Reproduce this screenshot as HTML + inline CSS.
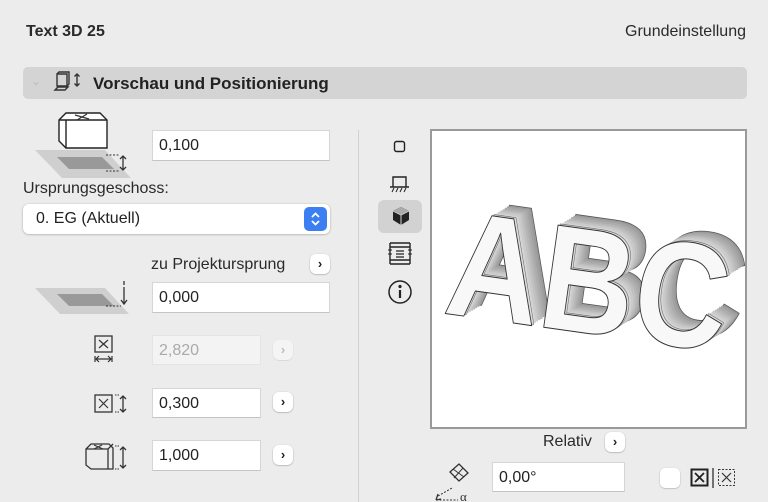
<!DOCTYPE html>
<html><head><meta charset="utf-8"><style>
*{margin:0;padding:0;box-sizing:border-box}
body{width:768px;height:502px;background:#ececec;font-family:"Liberation Sans",sans-serif;color:#222;position:relative;overflow:hidden}
.a{position:absolute}
.f{position:absolute;background:#fff;border:1px solid #d6d6d6;border-bottom-color:#c4c4c4;font-size:16px;padding-left:6px;line-height:29px;color:#222}
.btn{position:absolute;width:20px;height:20px;border-radius:6px;background:#fff;box-shadow:0 0.5px 1.5px rgba(0,0,0,.35);font-size:13px;font-weight:bold;text-align:center;line-height:20px;color:#222}
</style></head><body>
<div class="a" style="left:26px;top:23px;font-size:16px;font-weight:bold;color:#2a2a2a">Text 3D 25</div>
<div class="a" style="right:22px;top:23px;font-size:16px;color:#2a2a2a">Grundeinstellung</div>
<div class="a" style="left:23px;top:67px;width:724px;height:32px;background:#d4d4d4;border-radius:5px"></div>
<div class="a" style="left:31px;top:74px;font-size:12px;color:#bbb">&#8964;</div>
<svg class="a" style="left:53px;top:70px" width="30" height="26" viewBox="0 0 30 26" fill="none" stroke="#333" stroke-width="1.4"><path d="M4 4h10v12H4z M4 4l2-2h10v12l-2 2 M2 20l3-3h10l-3 3z"/><path d="M24 4v12 M21.5 6.5L24 4l2.5 2.5 M21.5 13.5L24 16l2.5-2.5"/></svg>
<div class="a" style="left:93px;top:74px;font-size:17px;font-weight:bold;color:#222">Vorschau und Positionierung</div>

<svg class="a" style="left:32px;top:112px" width="100" height="66" viewBox="0 0 100 66"><path d="M3 38h70l26 28H30z" fill="#cfcfcf"/><path d="M25 45h45l12 12H37z" fill="#999"/><path d="M27 8L34 1h34l7 7v28H34L27 29z" fill="#fff" stroke="#222" stroke-width="1.4"/><path d="M34 8h41 M34 8v28 M27 8h7" fill="none" stroke="#222" stroke-width="1.4"/><path d="M43 3l14 4 M55 2l-10 6" stroke="#333" stroke-width="1.3"/><path d="M74 43h13 M74 59h13" stroke="#333" stroke-dasharray="2 1.5"/><path d="M91 44v14 M88 47l3-3 3 3 M88 55l3 3 3-3" stroke="#333" stroke-width="1.3" fill="none"/></svg>
<div class="f" style="left:152px;top:130px;width:178px;height:31px">0,100</div>
<div class="a" style="left:23px;top:180px;font-size:16px;color:#2a2a2a">Ursprungsgeschoss:</div>
<div class="a" style="left:23px;top:204px;width:307px;height:30px;background:#fff;border-radius:6px;box-shadow:0 0.5px 2px rgba(0,0,0,.3);font-size:16px;line-height:30px;padding-left:13px">0. EG (Aktuell)</div>
<div class="a" style="left:304px;top:207px;width:23px;height:24px;background:#3b7ff3;border-radius:5px"></div>
<svg class="a" style="left:304px;top:207px" width="23" height="24"><path d="M8 10l3.5-3.5L15 10 M8 14l3.5 3.5L15 14" stroke="#fff" stroke-width="1.8" fill="none"/></svg>
<div class="a" style="left:151px;top:256px;font-size:16px;color:#2a2a2a">zu Projektursprung</div>
<div class="btn" style="left:310px;top:254px">›</div>
<svg class="a" style="left:32px;top:280px" width="100" height="34" viewBox="0 0 100 34"><path d="M3 8h70l24 26H28z" fill="#cfcfcf"/><path d="M25 14h45l12 12H37z" fill="#999"/><path d="M74 26h15" stroke="#333" stroke-dasharray="2 1.5"/><path d="M92 1v4 M92 7v16 M89 20l3 4 3-4" stroke="#333" stroke-width="1.3" fill="none"/></svg>
<div class="f" style="left:152px;top:282px;width:178px;height:31px">0,000</div>

<svg class="a" style="left:93px;top:334px" width="24" height="34"><rect x="2" y="2" width="17" height="16" fill="none" stroke="#333" stroke-width="1.3"/><path d="M6 6l9 8 M15 6l-9 8" stroke="#333" stroke-width="1.2"/><path d="M2 22v6 M19 22v6 M3 25h15 M6 22l-3 3 3 3 M15 22l3 3-3 3" stroke="#333" stroke-width="1.2" fill="none"/></svg>
<div class="f" style="left:152px;top:335px;width:109px;height:30px;background:#f3f3f3;color:#aaa;border-color:#e4e4e4">2,820</div>
<div class="btn" style="left:273px;top:340px;color:#bbb;box-shadow:0 0.5px 1px rgba(0,0,0,.15);background:#f4f4f4">›</div>

<svg class="a" style="left:93px;top:392px" width="36" height="26"><rect x="2" y="3" width="17" height="17" fill="none" stroke="#333" stroke-width="1.3"/><path d="M6 7l9 9 M15 7l-9 9" stroke="#333" stroke-width="1.2"/><path d="M22 3h4 M22 20h4" stroke="#333" stroke-dasharray="1.5 1"/><path d="M30 4v16 M27 7l3-3 3 3 M27 17l3 3 3-3" stroke="#333" stroke-width="1.3" fill="none"/></svg>
<div class="f" style="left:152px;top:388px;width:109px;height:30px">0,300</div>
<div class="btn" style="left:273px;top:392px">›</div>

<svg class="a" style="left:84px;top:443px" width="46" height="30"><path d="M2 6l5-5h18l4 4v21H7L2 22z M2 6h22v20 M24 6l5-5" fill="none" stroke="#333" stroke-width="1.3"/><path d="M10 2l9 4 M18 2l-8 4" stroke="#333" stroke-width="1"/><path d="M31 3h4 M31 26h4" stroke="#333" stroke-dasharray="1.5 1"/><path d="M39 4v21 M36 7l3-3 3 3 M36 22l3 3 3-3" stroke="#333" stroke-width="1.3" fill="none"/></svg>
<div class="f" style="left:152px;top:440px;width:109px;height:31px">1,000</div>
<div class="btn" style="left:273px;top:445px">›</div>

<div class="a" style="left:358px;top:130px;width:1px;height:372px;background:#d2d2d2"></div>

<svg class="a" style="left:392px;top:139px" width="16" height="16"><rect x="2.5" y="2.5" width="10" height="10" rx="2" fill="none" stroke="#222" stroke-width="1.4"/></svg>
<svg class="a" style="left:388px;top:174px" width="24" height="20"><path d="M5 13V3h13v10 M2 13h19" fill="none" stroke="#222" stroke-width="1.4"/><path d="M4 18l2-4 M8 18l2-4 M12 18l2-4 M16 18l2-4" stroke="#222" stroke-width="1"/></svg>
<div class="a" style="left:378px;top:200px;width:44px;height:33px;background:#d2d2d2;border-radius:6px"></div>
<svg class="a" style="left:390px;top:205px" width="22" height="22"><path d="M11 2l8 4v9l-8 5-8-5V6z" fill="#222"/><path d="M3 6l8 4 8-4 M11 10v10" stroke="#fff" stroke-width="0.8" fill="none"/><path d="M3 6l8-4 8 4-8 4z" fill="#aaa"/></svg>
<svg class="a" style="left:387px;top:240px" width="26" height="26"><path d="M3 3v21 M23 3v21 M3 3h20 M3 24h20 M3 7h20 M3 20h20" stroke="#222" stroke-width="1.4" fill="none"/><path d="M9 11h8 M9 14h8 M9 17h8" stroke="#222" stroke-width="1.3"/><path d="M1 10h4 M1 14h4 M21 10h4 M21 14h4" stroke="#222"/></svg>
<svg class="a" style="left:387px;top:279px" width="26" height="26"><circle cx="13" cy="13" r="11" fill="none" stroke="#222" stroke-width="1.5"/><circle cx="13" cy="7.5" r="1.6" fill="#222"/><path d="M13 11v8" stroke="#222" stroke-width="2.2"/></svg>

<div class="a" style="left:430px;top:129px;width:317px;height:300px;background:#fff;border:2px solid #9a9a9a"></div>
<svg class="a" style="left:432px;top:131px" width="313" height="296" viewBox="0 0 313 296">
<g transform="translate(10,182) rotate(8)" font-family="Liberation Sans,sans-serif" font-size="150" font-weight="bold" stroke-linejoin="round">
<text x="16" y="-13" textLength="282" lengthAdjust="spacingAndGlyphs" fill="#999" stroke="#555" stroke-width="0.8">ABC</text>
<text x="14" y="-11.5" textLength="282" lengthAdjust="spacingAndGlyphs" fill="#a2a2a2">ABC</text>
<text x="12" y="-10" textLength="282" lengthAdjust="spacingAndGlyphs" fill="#acacac">ABC</text>
<text x="10" y="-8" textLength="282" lengthAdjust="spacingAndGlyphs" fill="#b6b6b6">ABC</text>
<text x="8" y="-6.5" textLength="282" lengthAdjust="spacingAndGlyphs" fill="#c0c0c0">ABC</text>
<text x="6" y="-5" textLength="282" lengthAdjust="spacingAndGlyphs" fill="#cacaca">ABC</text>
<text x="4" y="-3" textLength="282" lengthAdjust="spacingAndGlyphs" fill="#d4d4d4">ABC</text>
<text x="2" y="-1.5" textLength="282" lengthAdjust="spacingAndGlyphs" fill="#dcdcdc" stroke="#666" stroke-width="0.6">ABC</text>
<text x="0" y="0" textLength="282" lengthAdjust="spacingAndGlyphs" fill="#f8f8f8" stroke="#333" stroke-width="1">ABC</text>
</g></svg>

<div class="a" style="left:543px;top:433px;font-size:16px;color:#2a2a2a">Relativ</div>
<div class="btn" style="left:605px;top:432px">›</div>
<svg class="a" style="left:432px;top:460px" width="46" height="42"><path d="M18 12l9-8 9 9-9 8z" fill="none" stroke="#333" stroke-width="1.3"/><path d="M21 9l11 8 M31 8l-9 10" stroke="#333"/><path d="M4 40h22 M6 36l14-8" stroke="#333" stroke-dasharray="2 1.5"/><path d="M4 40l2-6 M4 40l5-1" stroke="#333" stroke-width="1.3" fill="none"/><text x="28" y="41" font-size="13" font-family="Liberation Serif,serif" fill="#333">α</text></svg>
<div class="f" style="left:492px;top:462px;width:133px;height:30px">0,00°</div>
<div class="a" style="left:660px;top:468px;width:20px;height:20px;background:#fff;border-radius:5px;box-shadow:0 0.5px 1.5px rgba(0,0,0,.3)"></div>
<svg class="a" style="left:690px;top:467px" width="50" height="22"><rect x="1.5" y="2.5" width="16" height="16" fill="none" stroke="#222" stroke-width="2"/><path d="M5 6l9 9 M14 6l-9 9" stroke="#222" stroke-width="1.8"/><path d="M23 1v20" stroke="#222" stroke-width="1.2"/><rect x="28.5" y="2.5" width="16" height="16" fill="none" stroke="#333" stroke-dasharray="2 1.5"/><path d="M32 6l9 9 M41 6l-9 9" stroke="#333" stroke-width="1.2"/></svg>
</body></html>
